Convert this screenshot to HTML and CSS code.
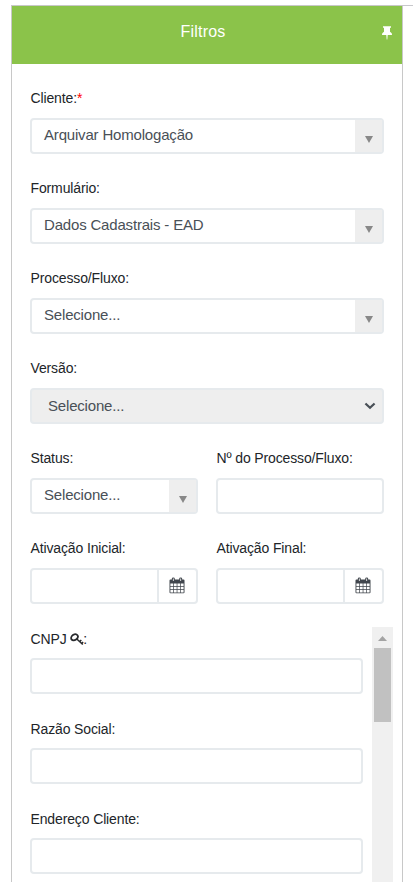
FILE: index.html
```html
<!DOCTYPE html>
<html lang="pt-BR">
<head>
<meta charset="utf-8">
<title>Filtros</title>
<link rel="stylesheet" href="styles.css">
</head>
<body>
<svg class="defs" aria-hidden="true">
  <symbol id="calendar" viewBox="0 0 16 17">
    <path fill="#41464d" d="M1.500 2.500H2.800V1.700Q2.800.5 4.300.5T5.800 1.700V2.500H10.200V1.700Q10.200.5 11.700.5T13.200 1.700V2.500H14.500Q15.500 2.500 15.500 3.500V15.300Q15.500 16.300 14.500 16.300H1.500Q.5 16.300.5 15.300V3.500Q.5 2.500 1.500 2.500Z"/>
    <path fill="#fff" d="M3.900 1.500h.8v2.400h-.8zM11.300 1.500h.8v2.400h-.8zM1.400 6.600h2.700v2.400H1.400zM4.800 6.600h2.900v2.400H4.800zM8.400 6.600h2.900v2.400H8.400zM12 6.600h2.600v2.400H12zM1.400 9.800h2.700v2.400H1.400zM4.800 9.800h2.900v2.400H4.800zM8.400 9.800h2.900v2.400H8.400zM12 9.800h2.600v2.400H12zM1.400 13h2.700v2.400H1.400zM4.800 13h2.900v2.400H4.800zM8.400 13h2.900v2.400H8.400zM12 13h2.600v2.400H12z"/>
  </symbol>
</svg>
<aside class="panel">
  <header class="panel-header">
    <h1>Filtros</h1>
    <svg class="pin" viewBox="0 0 10 14"><path fill="#fff" d="M1 .3h8v1.500H8v4l1.500 1.300q.5.500.5 1.900H5.700L5.300 13.500h-.6L4.300 9H0q0-1.400.5-1.900L2 5.800v-4H1z"/></svg>
  </header>
  <form class="filters">
    <div class="field"><label>Cliente:<span class="required">*</span></label>
      <div class="box combo"><span class="value">Arquivar Homologação</span><span class="arrow"></span></div></div>
    <div class="field"><label>Formulário:</label>
      <div class="box combo"><span class="value">Dados Cadastrais - EAD</span><span class="arrow"></span></div></div>
    <div class="field"><label>Processo/Fluxo:</label>
      <div class="box combo"><span class="value">Selecione...</span><span class="arrow"></span></div></div>
    <div class="field"><label>Versão:</label>
      <div class="box disabled"><span class="value">Selecione...</span><svg class="chevron" viewBox="0 0 10 7"><path d="M1 1.300l4 3.700 4-3.700" fill="none" stroke="#495057" stroke-width="2"/></svg></div></div>
    <div class="row">
      <div class="field"><label>Status:</label>
        <div class="box combo"><span class="value">Selecione...</span><span class="arrow"></span></div></div>
      <div class="field"><label>Nº do Processo/Fluxo:</label><div class="box"></div></div>
    </div>
    <div class="row">
      <div class="field"><label>Ativação Inicial:</label>
        <div class="box date"><span class="addon"><svg><use href="#calendar"/></svg></span></div></div>
      <div class="field"><label>Ativação Final:</label>
        <div class="box date"><span class="addon"><svg><use href="#calendar"/></svg></span></div></div>
    </div>
  </form>
  <div class="scroller">
    <div class="scroll-content">
      <div class="field"><label>CNPJ <svg class="key" viewBox="0 0 14 13"><g fill="none" stroke="#292b2e"><ellipse cx="4.500" cy="4.300" rx="3.600" ry="2.700" transform="rotate(-35 4.500 4.300)" stroke-width="1.800"/><path d="M6.800 6l6 5.500M9.500 8.800l1.800-1.800M11.300 10.800l1.800-1.800" stroke-width="1.600"/></g></svg>:</label><div class="box"></div></div>
      <div class="field"><label>Razão Social:</label><div class="box"></div></div>
      <div class="field"><label>Endereço Cliente:</label><div class="box"></div></div>
    </div>
    <div class="scrollbar"><span class="scroll-up"></span><span class="thumb"></span></div>
  </div>
</aside>
</body>
</html>
```
FILE: styles.css
```css
* { box-sizing: border-box; }
body {
  display: flex;
  margin: 0;
  padding: 5px 0 0 11px;
  height: 882px;
  overflow: hidden;
  background: #fff;
  color: #212529;
  font-family: "Liberation Sans", Arial, sans-serif;
}
body::after { content: ""; flex: 1; height: 1px; background: #c8c8cc; }
.defs { display: none; }
.panel {
  width: 392px;
  height: 877px;
  border: 1px solid #c8c8c8;
  border-bottom: 0;
  overflow: hidden;
}
.panel-header {
  display: flex;
  align-items: center;
  height: 58px;
  padding: 0 10px;
  background: #8bc34a;
}
h1 {
  flex: 1;
  margin: 0 0 7px;
  padding-left: 2px;
  color: #fff;
  font-size: 16px;
  font-weight: 400;
  line-height: 20px;
  text-align: center;
  letter-spacing: 0.2px;
}
.pin { width: 10px; height: 14px; margin-bottom: 5px; }
.filters {
  display: flex;
  flex-direction: column;
  gap: 24px;
  padding: 24px 18px 23px;
}
.row { display: grid; grid-template-columns: 168px 168px; gap: 18px; }
label {
  display: block;
  height: 20px;
  margin-bottom: 10px;
  padding-left: 0.5px;
  font-size: 14px;
  line-height: 20px;
  letter-spacing: -0.13px;
  white-space: nowrap;
}
.required { color: #f00; }
.box {
  display: flex;
  height: 36px;
  border: 2px solid #e6eaed;
  border-radius: 4px;
  background: #fff;
}
.value {
  flex: 1;
  padding-left: 12px;
  color: #495057;
  font-size: 15px;
  line-height: 30px;
  letter-spacing: -0.18px;
}
.arrow {
  display: flex;
  align-items: center;
  justify-content: center;
  width: 27px;
  padding-top: 6px;
  background: #eee;
}
.arrow::before {
  content: "";
  border: solid transparent;
  border-width: 7px 4px 0;
  border-top-color: #888;
}
.disabled { align-items: center; padding-right: 6px; background: #eee; }
.disabled .value { padding-left: 16px; line-height: 32px; }
.chevron { width: 12px; height: 8px; }
.date { justify-content: flex-end; }
.addon {
  display: flex;
  align-items: center;
  width: 39px;
  padding-left: 10px;
  border-left: 2px solid #e6eaed;
}
.addon svg { width: 16px; height: 17px; margin-bottom: 1px; }
.scroller { display: flex; height: 255px; padding: 0 9px 0 18px; }
.scroll-content {
  display: flex;
  flex-direction: column;
  gap: 24px;
  width: 333px;
  padding-top: 2px;
}
.scroll-content .field { flex: none; height: 66px; }
.scroll-content label { margin-bottom: 9px; }
.key { width: 14px; height: 13px; margin: 0 -1px 0 0; vertical-align: -2px; }
.scrollbar {
  display: flex;
  flex-direction: column;
  align-items: center;
  width: 21px;
  margin-left: auto;
  background: #f0f0f0;
}
.scroll-up {
  width: 9px;
  height: 5px;
  margin: 9px 0 7px;
  background: #a3a3a3;
  clip-path: polygon(50% 0, 100% 100%, 0 100%);
}
.thumb { width: 17px; height: 74px; background: #c1c1c1; }
```
